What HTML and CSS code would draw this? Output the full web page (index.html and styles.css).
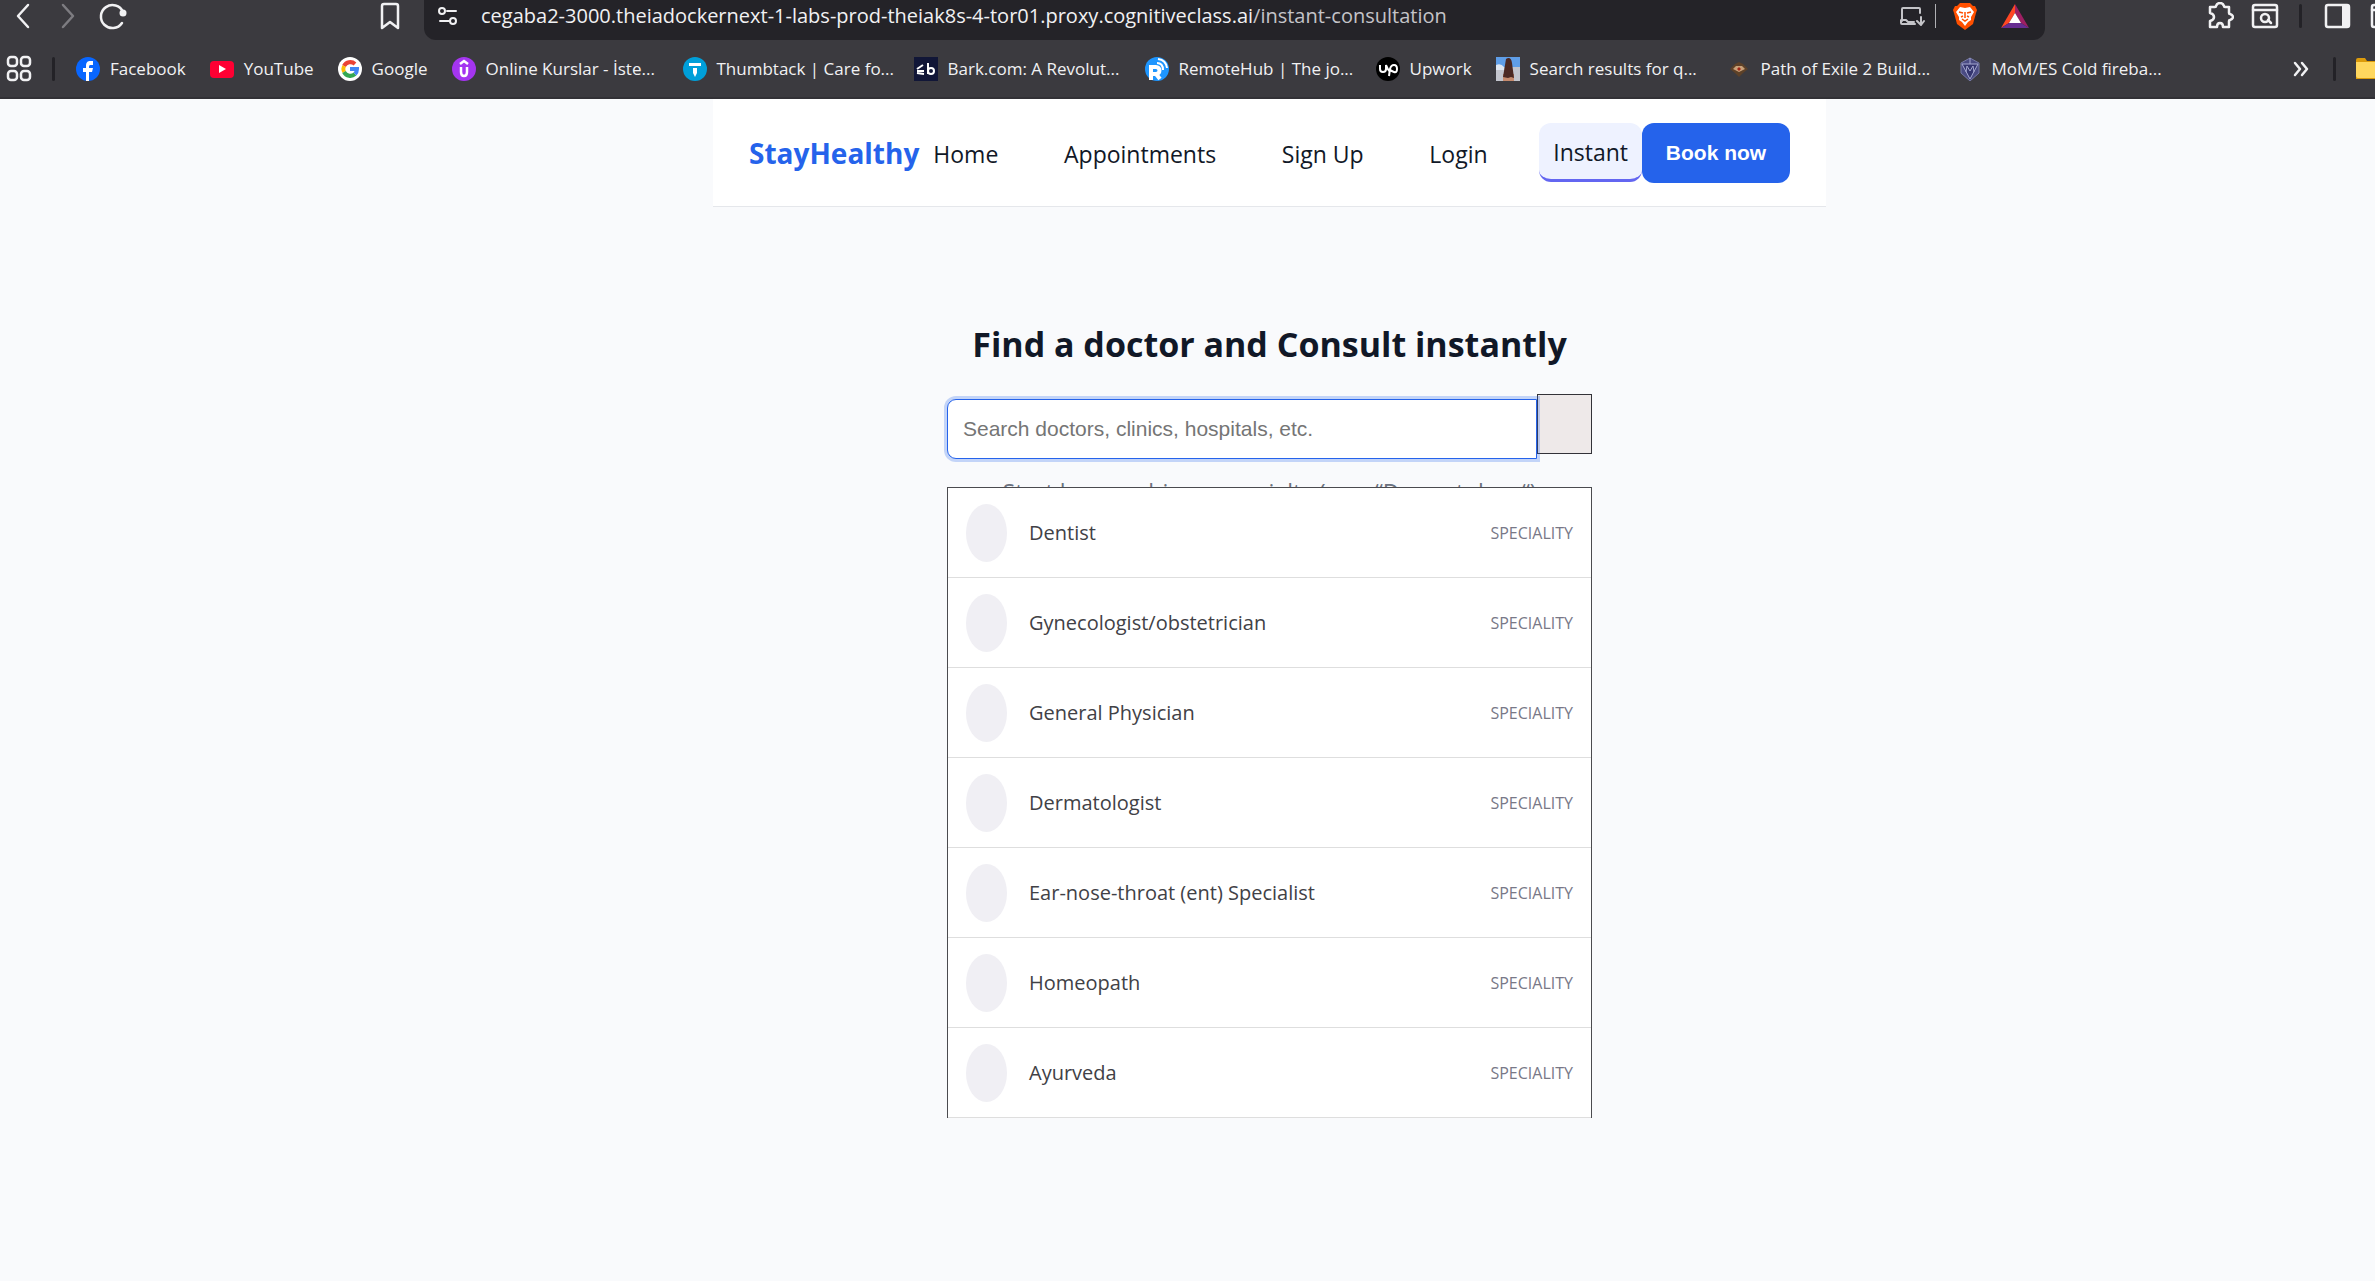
FILE: index.html
```html
<!DOCTYPE html>
<html lang="en">
<head>
<meta charset="utf-8">
<title>StayHealthy</title>
<link rel="stylesheet" href="styles.css">
</head>
<body>
<header class="browser">
  <div class="toolbar">
    <div class="toolbar-left">
      <button class="tool" aria-label="Back"><svg width="28" height="28" viewBox="0 0 28 28"><path d="M19 3L9 14l10 11" class="line bold"/></svg></button>
      <button class="tool dim" aria-label="Forward"><svg width="28" height="28" viewBox="0 0 28 28"><path d="M9 3l10 11L9 25" class="line bold"/></svg></button>
      <button class="tool" aria-label="Reload"><svg width="28" height="28" viewBox="0 0 28 28"><path d="M24 10A11.500 11.500 0 1 0 23 21" class="line bold"/><circle cx="24" cy="11" r="3.500" fill="currentColor"/></svg></button>
      <button class="tool tool-save" aria-label="Bookmark this page"><svg width="28" height="28" viewBox="0 0 28 28"><path d="M6 4q0-2 2-2h12q2 0 2 2v22l-8-6-8 6z" class="line bold"/></svg></button>
    </div>
    <div class="address">
      <svg class="site-icon" width="20" height="22" viewBox="0 0 20 22"><g class="line"><circle cx="4" cy="6" r="3"/><path d="M9 6h9M2 16h9"/><circle cx="15" cy="16" r="3"/></g></svg>
      <div class="url" role="textbox" aria-label="Address">cegaba2-3000.theiadockernext-1-labs-prod-theiak8s-4-tor01.proxy.cognitiveclass.ai<span class="url-path">/instant-consultation</span></div>
      <button class="mini" aria-label="Install"><svg width="26" height="22" viewBox="0 0 26 22"><g class="line"><path d="M21 8V4q0-1-1-1H4Q3 3 3 4v12M2 15h5l2 2h6M2 15v3q0 1 1 1h13M22 12v7M18 16l4 4 3-4"/></g></svg></button>
      <span class="address-rule"></span>
      <button class="mini" aria-label="Shields"><svg width="24" height="28" viewBox="0 0 24 28"><path d="M7 1h10l3 3 2 0 2 4-1 3-3 11-8 6-8-6L1 11 0 8l2-4h2z" fill="#ff5000"/><path d="M7 5l5 1 5-1 4 5-3 5 0 3-3 2-3 4-3-4-3-2 0-3-3-5z" fill="#fff"/><path d="M6 10l4 1M18 10l-4 1M12 10v6M9 17l3 2 3-2M8 15l2-1M16 15l-2-1" stroke="#ff5000" stroke-width="1.500" fill="none"/></svg></button>
      <button class="mini mini-last" aria-label="Rewards"><svg width="28" height="24" viewBox="0 0 28 24"><path d="M14 0L0 24l8-5 6-10z" fill="#ff4724"/><path d="M14 0l14 24-8-5-6-10z" fill="#9e1f63"/><path d="M0 24h28l-8-5H8z" fill="#662d91"/><path d="M14 9l6 10H8z" fill="#fff"/></svg></button>
    </div>
    <div class="toolbar-right">
      <button class="tool" aria-label="Extensions"><svg width="28" height="28" viewBox="0 0 28 28"><path d="M4 5h5q1 0 1-1 1-3 4-3t4 3q0 1 1 1h4v6q0 1 1 1 3 1 3 3t-3 3q-1 0-1 1v6h-6q0-4-3-4t-3 4H4v-6q4-1 4-4t-4-4z" class="line bold"/></svg></button>
      <button class="tool" aria-label="Search tabs"><svg width="28" height="28" viewBox="0 0 28 28"><g class="line bold"><rect x="2" y="3" width="24" height="22" rx="2"/><path d="M2 8h24M17 18l3 3"/><circle cx="14" cy="16" r="4"/></g></svg></button>
      <span class="rule"></span>
      <button class="tool" aria-label="Sidebar"><svg width="28" height="28" viewBox="0 0 28 28"><rect x="3" y="3" width="23" height="22" rx="2" class="line bold"/><path d="M19 3h7v22h-7z" fill="currentColor"/></svg></button>
      <button class="tool" aria-label="Wallet"><svg width="28" height="28" viewBox="0 0 28 28"><g class="line bold"><rect x="4" y="3" width="22" height="22" rx="2"/><path d="M4 8h22"/></g></svg></button>
    </div>
  </div>
  <nav class="bookmarks" aria-label="Bookmarks">
    <button class="apps" aria-label="Apps"><svg width="26" height="28" viewBox="0 0 26 28"><g class="line bold"><rect x="2" y="2" width="9" height="9" rx="3"/><rect x="15" y="2" width="9" height="9" rx="3"/><rect x="2" y="16" width="9" height="9" rx="3"/><rect x="15" y="16" width="9" height="9" rx="3"/></g></svg></button>
    <span class="rule"></span>
    <a class="mark" href="#"><svg width="24" height="24" viewBox="0 0 24 24"><circle cx="12" cy="12" r="12" fill="#0866ff"/><path d="M10 24v-9H7v-4h3V9c0-4 2-5 4-5h3v4h-2c-1 0-2 0-2 2v1h4l-1 4h-3v9z" fill="#fff"/></svg>Facebook</a>
    <a class="mark" href="#"><svg width="24" height="24" viewBox="0 0 24 24"><rect y="4" width="24" height="17" rx="4" fill="#ff0033"/><path d="M9 8l7 4-7 4z" fill="#fff"/></svg>YouTube</a>
    <a class="mark" href="#"><svg width="24" height="24" viewBox="0 0 24 24"><circle cx="12" cy="12" r="12" fill="#fff"/><g fill="none" stroke-width="4"><path d="M6 9a7 7 0 0 1 11-2" stroke="#ea4335"/><path d="M6 15a7 7 0 0 1 0-6" stroke="#fbbc05"/><path d="M6 15a7 7 0 0 0 11 2" stroke="#34a853"/><path d="M12 12h7q0 3-2 5" stroke="#4285f4"/></g></svg>Google</a>
    <a class="mark mark-long" href="#"><svg width="24" height="24" viewBox="0 0 24 24"><circle cx="12" cy="12" r="12" fill="#a435f0"/><path d="M8 7l4-3 4 3M9 10v5q0 4 3 4t3-4v-5" fill="none" stroke="#fff" stroke-width="2.500"/></svg>Online Kurslar - İste...</a>
    <a class="mark mark-long" href="#"><svg width="24" height="24" viewBox="0 0 24 24"><circle cx="12" cy="12" r="12" fill="#009fd9"/><path d="M6 6h12v3H6zM10 11h4v5l-2 4-2-4z" fill="#fff"/></svg>Thumbtack | Care fo...</a>
    <a class="mark mark-long" href="#"><svg width="24" height="24" viewBox="0 0 24 24"><path d="M0 0h24v24H0z" fill="#111637"/><path d="M14 6v11M3 12l6-4M3 14h7M3 16l7 1" fill="none" stroke="#fff" stroke-width="2"/><circle cx="17" cy="14" r="3" fill="none" stroke="#fff" stroke-width="2"/></svg>Bark.com: A Revolut...</a>
    <a class="mark mark-long" href="#"><svg width="24" height="24" viewBox="0 0 24 24"><circle cx="12" cy="12" r="12" fill="#1e96ff"/><path d="M6 23V10h5a3 3 0 0 1 0 7H7M11 17l4 5" fill="none" stroke="#fff" stroke-width="4"/><path d="M12 6q6 0 6 7M13 2q8 1 9 9" fill="none" stroke="#fff" stroke-width="2"/></svg>RemoteHub | The jo...</a>
    <a class="mark" href="#"><svg width="24" height="24" viewBox="0 0 24 24"><circle cx="12" cy="12" r="12"/><path d="M4 8v4q0 3 3 3t3-3V8q2 5 4 7M13 19l1-7q1-4 4-4t3 4-3 3-5-3" fill="none" stroke="#fff" stroke-width="2"/></svg>Upwork</a>
    <a class="mark mark-long" href="#"><svg width="24" height="24" viewBox="0 0 24 24"><path d="M0 0h24v12H0z" fill="#5f9ee8"/><path d="M0 10h24v14H0z" fill="#c3c5cd"/><path d="M0 8q5-2 8 2v3H0z" fill="#dfe7f2"/><path d="M7 17h11v7H7z" fill="#c58a6d"/><path d="M10 2q5-3 6 4l2 15-3-1-3 1-5-1z" fill="#4b2923"/></svg>Search results for q...</a>
    <a class="mark mark-long" href="#"><svg width="24" height="24" viewBox="0 0 24 24"><path d="M3 12l5-5 4-2 4 2 5 5-5 4-4 4-4-4z" fill="#5d4128"/><path d="M6 12l3-3h6l3 3-6 3z" fill="#c8a078"/><path d="M10 12l2-2 2 2-2 2z" fill="#a12617"/></svg>Path of Exile 2 Build...</a>
    <a class="mark" href="#"><svg width="24" height="24" viewBox="0 0 24 24"><path d="M12 1l9 5v10l-9 8-9-8V6z" fill="#4a4b83" stroke="#777aa5"/><path d="M4 7h16l-8 15zM12 1v6M8 15l1-6 3 5 3-5 1 6" fill="#34356f" stroke="#a5a8d0"/></svg>MoM/ES Cold fireba...</a>
    <div class="bookmarks-end">
      <button class="more" aria-label="More bookmarks"><svg width="16" height="16" viewBox="0 0 16 16"><path d="M2 2l5 6-5 6M9 2l5 6-5 6" class="line bold"/></svg></button>
      <span class="rule"></span>
      <button class="folder" aria-label="All bookmarks"><svg width="32" height="24" viewBox="0 0 32 24"><path d="M0 3q0-2 2-2h7l2 3h21v18H0z" fill="#dc9b0b"/><path d="M0 5h32v16H2q-2 0-2-2z" fill="#ffd75e"/></svg></button>
    </div>
  </nav>
</header>

<div class="page">
  <nav class="site-nav" aria-label="Main">
    <a class="brand" href="#">StayHealthy</a>
    <ul class="links">
      <li><a class="link" href="#">Home</a></li>
      <li><a class="link" href="#">Appointments</a></li>
      <li><a class="link" href="#">Sign Up</a></li>
      <li><a class="link" href="#">Login</a></li>
      <li><a class="link link-active" href="#" aria-current="page">Instant</a></li>
    </ul>
    <button class="book">Book now</button>
  </nav>

  <main class="finder">
    <h1 class="title">Find a doctor and Consult instantly</h1>
    <div class="search">
      <form class="search-row">
        <input class="search-input" type="text" aria-label="Search doctors" placeholder="Search doctors, clinics, hospitals, etc.">
        <button class="search-button" type="button" aria-label="Search"></button>
      </form>
      <p class="hint">Start by searching a specialty (e.g., “Dermatology“)</p>
      <ul class="results">
        <li class="result"><span class="avatar"></span><span class="name">Dentist</span><span class="tag">SPECIALITY</span></li>
        <li class="result"><span class="avatar"></span><span class="name">Gynecologist/obstetrician</span><span class="tag">SPECIALITY</span></li>
        <li class="result"><span class="avatar"></span><span class="name">General Physician</span><span class="tag">SPECIALITY</span></li>
        <li class="result"><span class="avatar"></span><span class="name">Dermatologist</span><span class="tag">SPECIALITY</span></li>
        <li class="result"><span class="avatar"></span><span class="name">Ear-nose-throat (ent) Specialist</span><span class="tag">SPECIALITY</span></li>
        <li class="result"><span class="avatar"></span><span class="name">Homeopath</span><span class="tag">SPECIALITY</span></li>
        <li class="result"><span class="avatar"></span><span class="name">Ayurveda</span><span class="tag">SPECIALITY</span></li>
      </ul>
    </div>
  </main>
</div>
</body>
</html>
```
FILE: styles.css
```css
* {
  box-sizing: border-box;
}

body {
  min-height: 100vh;
  margin: 0;
  background: #f9fafc;
  color: #111827;
  font-family: "Open Sans", "Noto Sans", sans-serif;
}

button {
  margin: 0;
  padding: 0;
  border: 0;
  background: none;
  color: inherit;
}

a {
  color: inherit;
  text-decoration: none;
}

ul {
  margin: 0;
  padding: 0;
  list-style: none;
}

svg {
  display: block;
  flex: none;
}

.line {
  fill: none;
  stroke: currentColor;
  stroke-width: 2;
  stroke-linecap: round;
  stroke-linejoin: round;
}

.bold {
  stroke-width: 2.5;
}

/* Browser chrome */
.browser {
  overflow: hidden;
  background: #3b3a3f;
  border-bottom: 2px solid #323136;
  color: #f1f1f3;
}

.toolbar {
  display: flex;
  height: 40px;
}

.toolbar-left,
.toolbar-right {
  display: flex;
  flex: none;
  align-items: center;
  padding-bottom: 8px;
}

.toolbar-left {
  width: 424px;
  padding-right: 12px;
}

.toolbar-right {
  width: 330px;
  padding-left: 152px;
}

.tool {
  display: flex;
  flex: none;
  justify-content: center;
  width: 45px;
}

.dim {
  color: #7d7c81;
}

.tool-save {
  margin-left: auto;
}

.rule {
  flex: none;
  width: 3px;
  height: 24px;
  margin: 0 12px;
  border-radius: 2px;
  background: #232227;
}

.address {
  display: flex;
  flex: 1;
  align-items: center;
  min-width: 0;
  padding: 0 16px 8px 14px;
  border-radius: 0 0 12px 12px;
  background: #242328;
}

.site-icon {
  margin-right: 23px;
}

.url {
  flex: 1;
  overflow: hidden;
  font-size: 20px;
  line-height: 32px;
  white-space: nowrap;
}

.url-path {
  color: #c4c4c8;
}

.mini {
  flex: none;
  color: #c4c4c8;
}

.mini-last {
  margin-left: 24px;
}

.address-rule {
  width: 1px;
  height: 24px;
  margin: 0 17px 0 10px;
  background: #b0b0b4;
}

.bookmarks {
  display: flex;
  align-items: center;
  height: 57px;
  font-size: 17px;
  line-height: 24px;
}

.apps {
  flex: none;
  margin: 0 8px 0 6px;
}

.mark {
  display: flex;
  flex: none;
  align-items: center;
  gap: 10px;
  padding-right: 24px;
  white-space: nowrap;
}

.rule + .mark {
  margin-left: 9px;
}

.mark-long {
  width: 231px;
}

.bookmarks-end {
  display: flex;
  flex: none;
  align-items: center;
  width: 82px;
  margin-left: auto;
}

.more {
  flex: none;
  margin-right: 12px;
}

.bookmarks-end .rule {
  margin-right: 20px;
}

.page {
  padding-left: 164px;
}

.site-nav {
  display: flex;
  align-items: center;
  max-width: 1113px;
  height: 108px;
  margin: 0 auto;
  padding: 0 36px;
  border-bottom: 1px solid #e5e7eb;
  background: #fff;
}

.brand {
  color: #2563eb;
  font-size: 28px;
  font-weight: 700;
}

.links {
  display: flex;
  flex: 1;
  align-items: center;
  justify-content: space-between;
}

.link {
  display: block;
  padding: 13px 14px 11px;
  border-radius: 12px;
  font-size: 23px;
  line-height: 32px;
}

.link-active {
  border-bottom: 3px solid #6366f1;
  background: #eef2ff;
}

.book {
  flex: none;
  width: 148px;
  height: 60px;
  border-radius: 12px;
  background: #2563eb;
  color: #fff;
  font: 700 21px "Liberation Sans", Arial, sans-serif;
}

.finder {
  max-width: 645px;
  margin: 0 auto;
  padding-top: 114px;
}

.title {
  margin: 0 0 27px;
  font-size: 34px;
  font-weight: 700;
  line-height: 46px;
  text-align: center;
}

.search {
  position: relative;
}

.search-row {
  display: flex;
  align-items: flex-start;
}

.search-input {
  position: relative;
  z-index: 1;
  flex: 1;
  min-width: 0;
  height: 60px;
  margin-top: 5px;
  padding: 0 15px;
  border: 1px solid #2563eb;
  border-radius: 9px 0 0 9px;
  outline: none;
  background: #fff;
  box-shadow: 0 0 0 3px rgba(37, 99, 235, 0.25);
  font: 21px "Liberation Sans", Arial, sans-serif;
}

.search-input::placeholder {
  color: #757575;
}

.search-button {
  width: 55px;
  height: 60px;
  border: 1px solid #333238;
  background: #eee9e9;
}

.hint {
  margin: 17px 0 0;
  color: #6b7280;
  font-size: 23px;
  line-height: 32px;
  text-align: center;
}

/* Suggestions open over the hint */
.results {
  position: absolute;
  z-index: 2;
  top: 93px;
  right: 0;
  left: 0;
  border: 1px solid #4b4b4f;
  border-bottom: 0;
  background: #fff;
}

.result {
  display: flex;
  align-items: center;
  height: 90px;
  padding: 0 18px;
  border-bottom: 1px solid #dedede;
}

.avatar {
  width: 41px;
  height: 58px;
  margin-right: 22px;
  border-radius: 50%;
  background: #f0eff4;
}

.name {
  flex: 1;
  color: #414146;
  font-size: 20px;
}

.tag {
  color: #787887;
  font-size: 16px;
}
```
